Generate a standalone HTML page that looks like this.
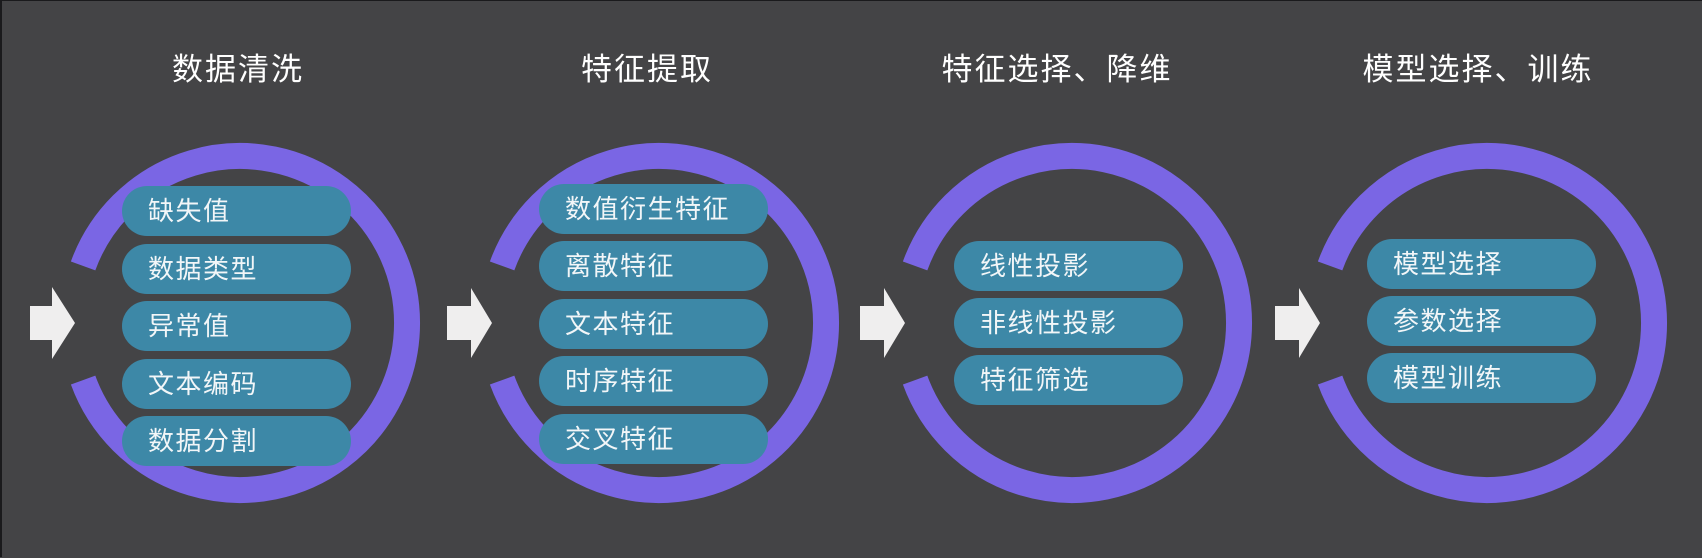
<!DOCTYPE html>
<html><head><meta charset="utf-8"><style>
html,body{margin:0;padding:0}
body{width:1702px;height:557px;background:#444446;position:relative;overflow:hidden;font-family:"Liberation Sans","Noto Sans CJK SC",sans-serif;border-top:1px solid #1a1a1c;border-left:2px solid #1a1a1c;box-sizing:border-box}
svg{position:absolute;left:0;top:0}
.t{position:absolute;top:48px;color:#fff;font-size:31px;letter-spacing:2px;white-space:nowrap;transform:translateX(-50%);line-height:42px}
.p{position:absolute;width:229px;height:50px;border-radius:25px;background:#3d88a7;color:#f2f6f8;font-size:26px;letter-spacing:1.5px;line-height:50px;padding-left:26px;box-sizing:border-box;white-space:nowrap}
</style></head><body>
<svg width="1702" height="557">
<g fill="none" stroke="#7a66e4" stroke-width="26">
<path d="M81.1 264.9 A167 167 0 1 1 81.1 379.1"/>
<path d="M500.1 264.9 A167 167 0 1 1 500.1 379.1"/>
<path d="M913.1 264.9 A167 167 0 1 1 913.1 379.1"/>
<path d="M1328.1 264.9 A167 167 0 1 1 1328.1 379.1"/>
</g>
<g fill="#efeeee">
<path d="M28 305 H50 V286 L73 322 L50 358 V339 H28 Z"/>
<path d="M445 305 H469 V287 L490 322 L469 357 V339 H445 Z"/>
<path d="M858 305 H882 V287 L903 322 L882 357 V339 H858 Z"/>
<path d="M1273 305 H1297 V287 L1318 322 L1297 357 V339 H1273 Z"/>
</g>
</svg>
<div class="t" style="left:236px">数据清洗</div>
<div class="t" style="left:645px">特征提取</div>
<div class="t" style="left:1055px">特征选择、降维</div>
<div class="t" style="left:1476px">模型选择、训练</div>

<div class="p" style="left:120px;top:185px">缺失值</div>
<div class="p" style="left:120px;top:243px">数据类型</div>
<div class="p" style="left:120px;top:300px">异常值</div>
<div class="p" style="left:120px;top:358px">文本编码</div>
<div class="p" style="left:120px;top:415px">数据分割</div>

<div class="p" style="left:537px;top:183px">数值衍生特征</div>
<div class="p" style="left:537px;top:240px">离散特征</div>
<div class="p" style="left:537px;top:298px">文本特征</div>
<div class="p" style="left:537px;top:355px">时序特征</div>
<div class="p" style="left:537px;top:413px">交叉特征</div>

<div class="p" style="left:952px;top:240px">线性投影</div>
<div class="p" style="left:952px;top:297px">非线性投影</div>
<div class="p" style="left:952px;top:354px">特征筛选</div>

<div class="p" style="left:1365px;top:238px">模型选择</div>
<div class="p" style="left:1365px;top:295px">参数选择</div>
<div class="p" style="left:1365px;top:352px">模型训练</div>
</body></html>
